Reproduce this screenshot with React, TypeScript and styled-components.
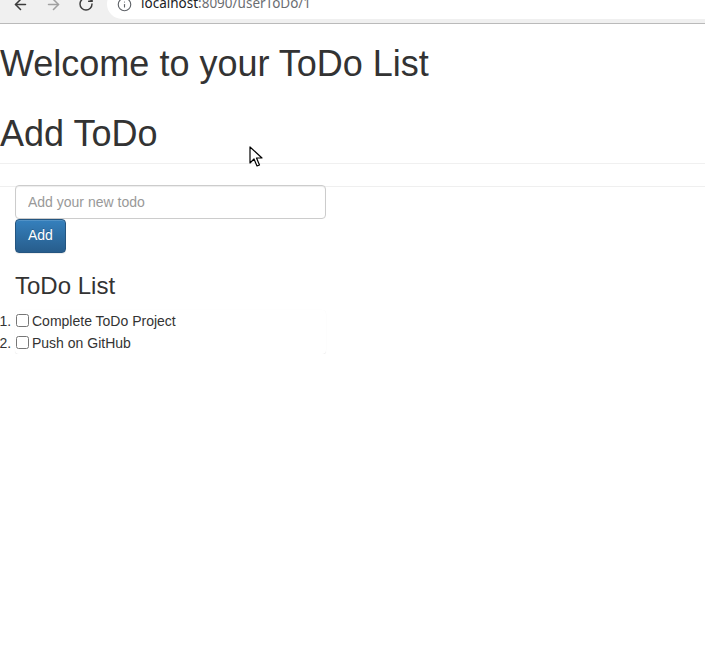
import React from "react";
import styled, { createGlobalStyle } from "styled-components";
import { ArrowLeft, ArrowRight, RotateCw, Info } from "lucide-react";

const Global = createGlobalStyle`
  html, body { margin: 0; padding: 0; background: #fff; }
  body {
    font-family: "Liberation Sans", Arial, Helvetica, sans-serif;
    font-size: 14px;
    line-height: 1.42857;
    color: #333;
  }
  * { box-sizing: border-box; }
`;

const Chrome = styled.div`
  height: 24px;
  background: #f0f0f0;
  border-bottom: 1px solid #bababa;
  overflow: hidden;
`;

const ToolRow = styled.div`
  display: flex;
  align-items: center;
  height: 34px;
  margin-top: -13px;
  padding-left: 12px;
`;

const NavButton = styled.span<{ $dim?: boolean }>`
  display: inline-flex;
  width: 17px;
  margin-right: 16px;
  color: ${(p) => (p.$dim ? "#a0a0a0" : "#3c3c3c")};
`;

const AddressBar = styled.div`
  flex: 1;
  height: 30px;
  margin-left: -4px;
  background: #fff;
  border-radius: 15px 0 0 15px;
  display: flex;
  align-items: center;
  padding-left: 10px;
  font-family: "Noto Sans", "DejaVu Sans", sans-serif;
  font-size: 13.5px;
`;

const InfoIcon = styled.span`
  display: inline-flex;
  color: #5f6368;
  margin-right: 9px;
`;

const Host = styled.span`
  color: #202124;
`;

const Path = styled.span`
  color: #6b6e72;
`;

const Page = styled.div`
  position: relative;
  display: flex;
  flex-direction: column;
`;

const H1 = styled.h1`
  font-size: 36px;
  font-weight: 500;
  line-height: 1.1;
  margin: 20px 0 10px;
  color: #333;
`;

const Band = styled.div`
  height: 24px;
  border-top: 1px solid #f0f0f0;
  border-bottom: 1px solid #efefef;
`;

const Section = styled.div`
  padding: 0 15px;
  margin-top: -2px;
`;

const Input = styled.input`
  display: block;
  width: 311px;
  height: 34px;
  padding: 6px 12px;
  font-family: inherit;
  font-size: 14px;
  color: #555;
  background: #fff;
  border: 1px solid #ccc;
  border-radius: 4px;
  box-shadow: inset 0 1px 1px rgba(0, 0, 0, 0.075);
  outline: none;
  &::placeholder { color: #999; }
`;

const Button = styled.button`
  display: block;
  height: 34px;
  padding: 6px 12px;
  font-family: inherit;
  font-size: 14px;
  line-height: 1.42857;
  color: #fff;
  background-image: linear-gradient(to bottom, #3580bd 0, #275d8c 100%);
  border: 1px solid #245580;
  border-radius: 4px;
  text-shadow: 0 -1px 0 rgba(0, 0, 0, 0.2);
  box-shadow: inset 0 1px 0 rgba(255, 255, 255, 0.15), 0 1px 1px rgba(0, 0, 0, 0.075);
`;

const H3 = styled.h3`
  font-size: 24px;
  font-weight: 500;
  line-height: 1.1;
  margin: 20px 0 10px;
  color: #333;
`;

const List = styled.ol`
  width: 311px;
  margin: 0;
  padding: 0;
  background: #fff;
  border-radius: 4px;
  box-shadow: 0 1px 1px rgba(0, 0, 0, 0.07), 0 0 1px rgba(0, 0, 0, 0.04);
`;

const Item = styled.li`
  line-height: 22px;
  height: 22px;
  font-size: 14px;
  color: #333;
`;

const Check = styled.input`
  width: 13px;
  height: 13px;
  margin: 0 3px 0 1px;
  vertical-align: -1px;
`;

const Cursor = styled.svg`
  position: absolute;
  left: 249px;
  top: 122px;
`;

export default function App() {
  return (
    <>
      <Global />
      <Chrome>
        <ToolRow>
          <NavButton><ArrowLeft size={17} strokeWidth={2.2} /></NavButton>
          <NavButton $dim><ArrowRight size={17} strokeWidth={2.2} /></NavButton>
          <NavButton><RotateCw size={16} strokeWidth={2.2} /></NavButton>
          <AddressBar>
            <InfoIcon><Info size={15} strokeWidth={1.8} /></InfoIcon>
            <Host>localhost</Host>
            <Path>:8090/userToDo/1</Path>
          </AddressBar>
        </ToolRow>
      </Chrome>
      <Page>
        <H1>Welcome to your ToDo List</H1>
        <H1>Add ToDo</H1>
        <Band />
        <Section>
          <Input placeholder="Add your new todo" />
          <Button>Add</Button>
          <H3>ToDo List</H3>
          <List>
            <Item><Check type="checkbox" />Complete ToDo Project</Item>
            <Item><Check type="checkbox" />Push on GitHub</Item>
          </List>
        </Section>
        <Cursor width="14" height="22" viewBox="0 0 14 22">
          <path d="M1 1 L1 17 L5 13 L8 20 L10.5 19 L7.5 12 L13 12 Z" fill="#fff" stroke="#000" strokeWidth="1.2" strokeLinejoin="round" />
        </Cursor>
      </Page>
    </>
  );
}
